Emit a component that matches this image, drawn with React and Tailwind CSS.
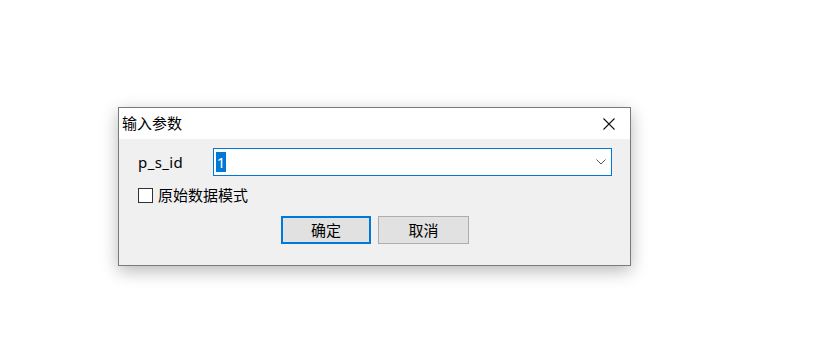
export default function App() {
  return (
    <div className="w-[831px] h-[357px] bg-white pt-[107px] pl-[118px] font-['Noto_Sans','Noto_Sans_CJK_SC',sans-serif] text-black">
      <div className="w-[513px] h-[159px] border border-[#7a7a7a] bg-[#f0f0f0] shadow-[0_5px_16px_rgba(0,0,0,0.28)] flex flex-col">
        <div className="h-[31px] bg-white flex items-center justify-between pl-[3px] pr-[15px]">
          <span className="text-[15px] leading-none">输入参数</span>
          <svg width="12" height="12" viewBox="0 0 12 12" className="block">
            <path d="M0.5 0.5 L11.5 11.5 M11.5 0.5 L0.5 11.5" stroke="#111" strokeWidth="1.1" fill="none" />
          </svg>
        </div>
        <div className="flex flex-col pl-[19px] pr-[18px] pt-[9px]">
          <div className="flex items-center h-[28px]">
            <span className="w-[75px] text-[15px] leading-none tracking-[0.4px]">p_s_id</span>
            <div className="flex-1 h-[28px] border border-[#0078d7] bg-white flex items-center justify-between pl-[2px] pr-[5px]">
              <span className="w-[10px] h-[20px] bg-[#0078d7] text-white text-[15px] leading-none flex items-center justify-center">1</span>
              <svg width="10" height="6" viewBox="0 0 10 6" className="block">
                <path d="M0.5 0.5 L5 5 L9.5 0.5" stroke="#555" strokeWidth="1" fill="none" />
              </svg>
            </div>
          </div>
          <div className="flex items-center h-[15px] mt-[12px] gap-[5px]">
            <div className="w-[15px] h-[15px] border border-[#333] bg-white" />
            <span className="text-[15px] leading-none">原始数据模式</span>
          </div>
          <div className="flex justify-center gap-[7px] mt-[13px]">
            <button className="w-[90px] h-[28px] border-2 border-[#0078d7] bg-[#e1e1e1] text-[15px] leading-none flex items-center justify-center">确定</button>
            <button className="w-[91px] h-[28px] border border-[#adadad] bg-[#e1e1e1] text-[15px] leading-none flex items-center justify-center">取消</button>
          </div>
        </div>
      </div>
    </div>
  );
}
